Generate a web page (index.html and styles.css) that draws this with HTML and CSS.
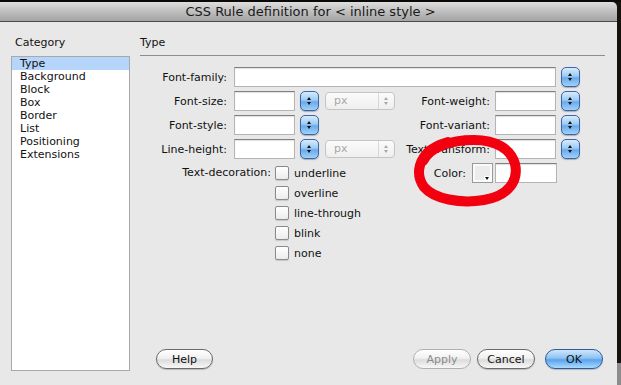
FILE: index.html
```html
<!DOCTYPE html>
<html lang="en">

<head>
    <meta charset="UTF-8">
    <title>CSS Rule definition</title>
    <link rel="stylesheet" href="styles.css">
</head>

<body>
    <div class="topstrip"></div>
    <div class="window">
        <div class="titlebar">CSS Rule definition for &lt; inline style &gt;</div>
        <div class="dialog">
            <div class="sidebar">
                <div class="heading">Category</div>
                <ul class="category_list">
                    <li class="selected">Type</li>
                    <li>Background</li>
                    <li>Block</li>
                    <li>Box</li>
                    <li>Border</li>
                    <li>List</li>
                    <li>Positioning</li>
                    <li>Extensions</li>
                </ul>
            </div>

            <div class="panel">
                <div class="heading section_title">Type</div>

                <div class="form">
                    <div class="row">
                        <label class="lbl">Font-family:</label>
                        <div class="field wide"></div>
                        <div class="spinner"><span class="up"></span><span class="down"></span></div>
                    </div>
                    <div class="row">
                        <label class="lbl">Font-size:</label>
                        <div class="field"></div>
                        <div class="spinner"><span class="up"></span><span class="down"></span></div>
                        <div class="select"><span>px</span><i class="sel_arrows"><b class="up"></b><b class="down"></b></i></div>
                        <label class="lbl2">Font-weight:</label>
                        <div class="field"></div>
                        <div class="spinner"><span class="up"></span><span class="down"></span></div>
                    </div>
                    <div class="row">
                        <label class="lbl">Font-style:</label>
                        <div class="field"></div>
                        <div class="spinner"><span class="up"></span><span class="down"></span></div>
                        <div class="select_gap"></div>
                        <label class="lbl2">Font-variant:</label>
                        <div class="field"></div>
                        <div class="spinner"><span class="up"></span><span class="down"></span></div>
                    </div>
                    <div class="row">
                        <label class="lbl">Line-height:</label>
                        <div class="field"></div>
                        <div class="spinner"><span class="up"></span><span class="down"></span></div>
                        <div class="select"><span>px</span><i class="sel_arrows"><b class="up"></b><b class="down"></b></i></div>
                        <label class="lbl2">Text-transform:</label>
                        <div class="field"></div>
                        <div class="spinner"><span class="up"></span><span class="down"></span></div>
                    </div>

                    <div class="decoration">
                        <label class="deco_lbl">Text-decoration:</label>
                        <div class="checks">
                            <div class="check"><span class="box"></span>underline</div>
                            <div class="check"><span class="box"></span>overline</div>
                            <div class="check"><span class="box"></span>line-through</div>
                            <div class="check"><span class="box"></span>blink</div>
                            <div class="check"><span class="box"></span>none</div>
                        </div>
                        <div class="color_group">
                            <label>Color:</label>
                            <div class="swatch"><span class="swatch_arrow"></span></div>
                            <div class="field color_field"></div>
                        </div>
                    </div>
                </div>

                <div class="buttons">
                    <button class="btn help">Help</button>
                    <button class="btn apply" disabled>Apply</button>
                    <button class="btn cancel">Cancel</button>
                    <button class="btn ok">OK</button>
                </div>
            </div>
        </div>
    </div>

    <svg class="scribble" width="621" height="385" viewBox="0 0 621 385">
        <path d="M 423 161 C 430 147, 450 140, 474 140 C 496 140, 511 149, 515 164 C 519 181, 508 196, 484 200 C 460 204, 434 199, 424 187 C 416 176, 418 163, 427 153 C 433 147, 441 144, 448 142"
            fill="none" stroke="#f2000f" stroke-width="10" stroke-linecap="round" stroke-linejoin="round" />
    </svg>
</body>

</html>
```

FILE: styles.css
```css
body {
    margin: 0;
    width: 621px;
    height: 385px;
    overflow: hidden;
    position: relative;
    background: linear-gradient(to bottom, #16120c 363px, #8c8c8c 363px);
    font-family: "DejaVu Sans", sans-serif;
    font-size: 11px;
    color: #111;
}

.topstrip {
    height: 2px;
    background: #0c0a07;
}

.window {
    width: 617px;
    height: 383px;
    display: flex;
    flex-direction: column;
}

.titlebar {
    height: 19px;
    line-height: 19px;
    text-align: center;
    font-size: 13px;
    color: #1a1a1a;
    background: linear-gradient(to bottom, #dedede, #b9b9b9 60%, #a4a4a4);
    border-bottom: 1px solid #4a4a4a;
    border-top-right-radius: 5px;
    padding-left: 4px;
}

.dialog {
    flex: 1;
    display: flex;
    background: #e8e8e8;
}

.heading {
    margin-top: 14px;
    line-height: 14px;
}

.sidebar {
    width: 129px;
    padding-left: 11px;
}

.sidebar .heading {
    padding-left: 4px;
    margin-bottom: 6px;
}

.category_list {
    list-style: none;
    margin: 0;
    padding: 0;
    width: 117px;
    height: 313px;
    background: #fff;
    border: 1px solid #a9a9a9;
}

.category_list li {
    height: 13px;
    line-height: 13px;
    padding-left: 8px;
}

.category_list li.selected {
    background: #b6d5fb;
}

.panel {
    flex: 1;
    display: flex;
    flex-direction: column;
}

.section_title {
    padding-bottom: 5px;
    border-bottom: 1px solid #8d8d8d;
    margin-right: 12px;
}

.form {
    margin-top: 11px;
    display: flex;
    flex-direction: column;
    gap: 4px;
}

.row {
    display: flex;
    align-items: center;
    height: 20px;
}

.lbl {
    width: 87px;
    margin-right: 7px;
    text-align: right;
}

.lbl2 {
    width: 95px;
    margin-right: 5px;
    text-align: right;
}

.field {
    width: 59px;
    height: 18px;
    background: #fff;
    border: 1px solid #b4b4b4;
    border-top-color: #7f7f7f;
    box-shadow: inset 0 1px 1px rgba(0, 0, 0, 0.12);
}

.field.wide {
    width: 320px;
}

.spinner {
    position: relative;
    width: 17px;
    height: 18px;
    margin-left: 5px;
    border: 1px solid #3a66a8;
    border-radius: 5px;
    background: linear-gradient(to bottom, #d6ebfc, #9ccbf4 45%, #6aa9ea 55%, #9fd2fb);
    box-shadow: 0 1px 1px rgba(0, 0, 0, 0.25);
}

.spinner .up,
.spinner .down {
    position: absolute;
    left: 6px;
    width: 0;
    height: 0;
    border-left: 2.5px solid transparent;
    border-right: 2.5px solid transparent;
}

.spinner .up {
    top: 5px;
    border-bottom: 3px solid #111;
}

.spinner .down {
    top: 10px;
    border-top: 3px solid #111;
}

.select {
    position: relative;
    width: 68px;
    height: 16px;
    margin-left: 6px;
    border: 1px solid #c4c4c4;
    border-radius: 4px;
    background: linear-gradient(to bottom, #fbfbfb, #efefef);
    color: #a8a8a8;
    line-height: 16px;
}

.select span {
    padding-left: 8px;
}

.sel_arrows {
    position: absolute;
    right: 0;
    top: 0;
    width: 15px;
    height: 16px;
    border-left: 1px solid #d8d8d8;
}

.sel_arrows .up,
.sel_arrows .down {
    position: absolute;
    left: 5px;
    width: 0;
    height: 0;
    border-left: 2.5px solid transparent;
    border-right: 2.5px solid transparent;
}

.sel_arrows .up {
    top: 4px;
    border-bottom: 3px solid #a8a8a8;
}

.sel_arrows .down {
    top: 9px;
    border-top: 3px solid #a8a8a8;
}

.select_gap {
    width: 70px;
    margin-left: 6px;
}

.decoration {
    display: flex;
    align-items: flex-start;
}

.deco_lbl {
    width: 131px;
    height: 20px;
    line-height: 20px;
    text-align: right;
    margin-right: 4px;
}

.check {
    display: flex;
    align-items: center;
    height: 20px;
}

.check .box {
    width: 12px;
    height: 12px;
    margin-right: 5px;
    border: 1px solid #8a8a8a;
    border-radius: 2px;
    background: linear-gradient(to bottom, #ffffff, #ececec);
    box-shadow: 0 1px 1px rgba(0, 0, 0, 0.15);
}

.color_group {
    display: flex;
    align-items: center;
    height: 20px;
    margin-left: auto;
    margin-right: 60px;
}

.color_group label {
    margin-right: 6px;
}

.swatch {
    position: relative;
    width: 19px;
    height: 18px;
    border: 1px solid #9a9a9a;
    background: #ececec;
    box-shadow: inset 0 0 0 2px #fafafa;
}

.swatch_arrow {
    position: absolute;
    right: 1px;
    bottom: 1px;
    width: 7px;
    height: 5px;
    background: #fff;
}

.swatch_arrow::after {
    content: "";
    position: absolute;
    left: 1px;
    top: 1px;
    border-left: 2.5px solid transparent;
    border-right: 2.5px solid transparent;
    border-top: 3px solid #111;
}

.color_field {
    width: 60px;
    margin-left: 2px;
}

.buttons {
    margin-top: auto;
    margin-bottom: 16px;
    display: flex;
    padding-left: 16px;
}

.btn {
    height: 20px;
    padding: 0;
    font-family: "DejaVu Sans", sans-serif;
    font-size: 11px;
    color: #111;
    border: 1px solid #6a6a6a;
    border-radius: 10px;
    background: linear-gradient(to bottom, #ffffff, #f1f1f1 45%, #dcdcdc 55%, #f7f7f7);
    box-shadow: 0 1px 1px rgba(0, 0, 0, 0.2);
}

.help {
    width: 57px;
}

.apply {
    width: 58px;
    margin-left: auto;
    color: #8c8c8c;
    border-color: #b0b0b0;
    box-shadow: none;
}

.cancel {
    width: 58px;
    margin-left: 6px;
}

.ok {
    width: 58px;
    margin-left: 10px;
    margin-right: 14px;
    border-color: #2c5a9e;
    background: linear-gradient(to bottom, #cfe6fb, #8ec3f2 45%, #5aa3ec 55%, #a9dbff);
}

.scribble {
    position: absolute;
    left: 0;
    top: 0;
    pointer-events: none;
}
```
